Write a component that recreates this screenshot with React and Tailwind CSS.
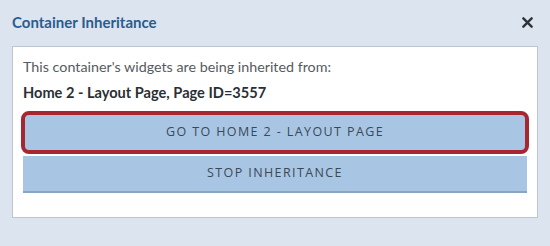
export default function App() {
  return (
    <div className="w-[550px] h-[246px] bg-[#dbe4ef] flex flex-col font-['Lato',sans-serif]">
      {/* Header */}
      <div className="h-[46px] flex items-center justify-between pl-3 pr-[17px] pb-[1px]">
        <h1 className="text-[15px] font-bold text-[#2b5c8e] leading-none">Container Inheritance</h1>
        <button className="w-[12px] h-[12px] flex items-center justify-center text-[#2f3338]">
          <svg viewBox="0 0 12 12" width="11" height="11">
            <path d="M1.5 1.5 L10.5 10.5 M10.5 1.5 L1.5 10.5" stroke="currentColor" strokeWidth="2.6" strokeLinecap="round" />
          </svg>
        </button>
      </div>

      {/* Panel */}
      <div className="mx-3 h-[172px] bg-white border border-[#bcc6d1] px-[10px] pt-[12px] flex flex-col">
        <p className="text-[14.3px] leading-[16px] text-[#555b61]">
          This container's widgets are being inherited from:
        </p>
        <p className="mt-[10px] text-[14.6px] leading-[16px] font-bold text-[#2a2f35]">
          Home 2 - Layout Page, Page ID=3557
        </p>

        <div className="mt-[12px] flex flex-col gap-[4px] font-['Open_Sans',sans-serif]">
          <button className="h-[39px] bg-[#a8c6e4] text-[12.5px] tracking-[1.4px] text-[#3b4856] rounded-[6px] outline-4 outline-solid outline-[#a7262f] outline-offset-[-2px]">
            GO TO HOME 2 - LAYOUT PAGE
          </button>
          <button className="h-[37px] bg-[#a8c6e4] border-b-2 border-[#8aa5c0] text-[12.5px] tracking-[1.4px] text-[#3b4856]">
            STOP INHERITANCE
          </button>
        </div>
      </div>
    </div>
  );
}
